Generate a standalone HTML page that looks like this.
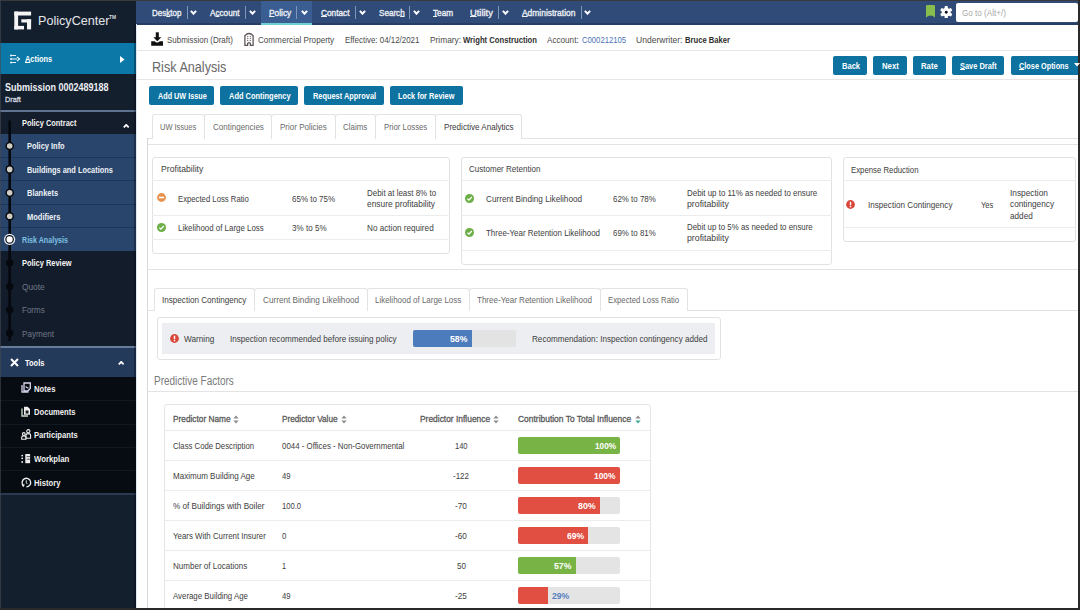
<!DOCTYPE html><html><head><meta charset="utf-8"><style>html,body{margin:0;padding:0;width:1080px;height:610px;overflow:hidden;background:#fff}body{position:relative;font-family:"Liberation Sans",sans-serif}div,span,svg{position:absolute}.t{white-space:nowrap;line-height:1;transform-origin:0 0}u{text-decoration:underline;text-underline-offset:0px;text-decoration-thickness:1px}</style></head><body>
<div style="left:0px;top:0px;width:136px;height:610px;background:#141f2e"></div>
<div style="left:0px;top:43px;width:136px;height:31px;background:#0b78a8"></div>
<div style="left:0px;top:110px;width:136px;height:2px;background:#5f7290"></div>
<div style="left:0px;top:112px;width:136px;height:22px;background:#141d2b"></div>
<div style="left:0px;top:134px;width:136px;height:117px;background:#2a456b"></div>
<div style="left:0px;top:157px;width:136px;height:1px;background:#1e365a"></div>
<div style="left:0px;top:180px;width:136px;height:1px;background:#1e365a"></div>
<div style="left:0px;top:204px;width:136px;height:1px;background:#1e365a"></div>
<div style="left:0px;top:227px;width:136px;height:1px;background:#1e365a"></div>
<div style="left:0px;top:251px;width:136px;height:94px;background:#131c2a"></div>
<div style="left:0px;top:345.5px;width:136px;height:2.0px;background:#667c9c"></div>
<div style="left:0px;top:347.5px;width:136px;height:29.5px;background:#243a5b"></div>
<div style="left:0px;top:377px;width:136px;height:117px;background:#070b12"></div>
<div style="left:0px;top:400px;width:136px;height:1px;background:#121822"></div>
<div style="left:0px;top:424px;width:136px;height:1px;background:#121822"></div>
<div style="left:0px;top:447px;width:136px;height:1px;background:#121822"></div>
<div style="left:0px;top:470px;width:136px;height:1px;background:#121822"></div>
<div style="left:0px;top:493px;width:136px;height:2px;background:#2a3a52"></div>
<div style="left:136px;top:0px;width:944px;height:24px;background:#314b78"></div>
<div style="left:261px;top:0px;width:51px;height:24px;background:#3b5e92"></div>
<div style="left:136px;top:23px;width:944px;height:2px;background:#273d64"></div>
<div style="left:261px;top:22.5px;width:51px;height:2.5px;background:#6fcfd6"></div>
<div style="left:956px;top:3px;width:122px;height:19px;background:#fff;border-radius:2px"></div>
<div style="left:136px;top:25px;width:944px;height:585px;background:#fff"></div>
<div style="left:136px;top:24px;width:1px;height:586px;background:#dfe8f2"></div>
<div style="left:136px;top:50px;width:944px;height:1px;background:#e6e6e6"></div>
<div style="left:136px;top:79px;width:944px;height:1px;background:#e6e6e6"></div>
<div style="left:149px;top:86px;width:65px;height:19px;background:#0d72a0;border-radius:2px"></div>
<div style="left:220px;top:86px;width:78px;height:19px;background:#0d72a0;border-radius:2px"></div>
<div style="left:304px;top:86px;width:80px;height:19px;background:#0d72a0;border-radius:2px"></div>
<div style="left:390px;top:86px;width:73px;height:19px;background:#0d72a0;border-radius:2px"></div>
<div style="left:833px;top:56px;width:34px;height:19px;background:#0d72a0;border-radius:2px"></div>
<div style="left:873px;top:56px;width:34px;height:19px;background:#0d72a0;border-radius:2px"></div>
<div style="left:913px;top:56px;width:33px;height:19px;background:#0d72a0;border-radius:2px"></div>
<div style="left:952px;top:56px;width:52px;height:19px;background:#0d72a0;border-radius:2px"></div>
<div style="left:1011px;top:56px;width:79px;height:19px;background:#0d72a0;border-radius:2px"></div>
<div style="left:147px;top:138px;width:933px;height:1px;background:#e3e3e3"></div>
<div style="left:152px;top:114px;width:53px;height:25px;border:1px solid #e3e3e3;border-bottom:0;border-radius:3px 3px 0 0;box-sizing:border-box;background:#fff"></div>
<div style="left:204px;top:114px;width:68px;height:25px;border:1px solid #e3e3e3;border-bottom:0;border-radius:3px 3px 0 0;box-sizing:border-box;background:#fff"></div>
<div style="left:271px;top:114px;width:65px;height:25px;border:1px solid #e3e3e3;border-bottom:0;border-radius:3px 3px 0 0;box-sizing:border-box;background:#fff"></div>
<div style="left:335px;top:114px;width:41px;height:25px;border:1px solid #e3e3e3;border-bottom:0;border-radius:3px 3px 0 0;box-sizing:border-box;background:#fff"></div>
<div style="left:375px;top:114px;width:61px;height:25px;border:1px solid #e3e3e3;border-bottom:0;border-radius:3px 3px 0 0;box-sizing:border-box;background:#fff"></div>
<div style="left:435px;top:114px;width:87px;height:25px;border:1px solid #e3e3e3;border-bottom:0;border-radius:3px 3px 0 0;box-sizing:border-box;background:#fff"></div>
<div style="left:436px;top:138px;width:85px;height:1px;background:#fff"></div>
<div style="left:147px;top:144px;width:933px;height:1px;background:#e3e3e3"></div>
<div style="left:147px;top:138px;width:1px;height:472px;background:#d8d8d8"></div>
<div style="left:152px;top:157px;width:298px;height:97px;border:1px solid #e2e2e2;border-radius:3px;box-sizing:border-box;background:#fff"></div>
<div style="left:152px;top:180px;width:298px;height:1px;background:#ececec"></div>
<div style="left:152px;top:215px;width:298px;height:1px;background:#ececec"></div>
<div style="left:152px;top:239px;width:298px;height:1px;background:#ececec"></div>
<div style="left:461px;top:157px;width:371px;height:108px;border:1px solid #e2e2e2;border-radius:3px;box-sizing:border-box;background:#fff"></div>
<div style="left:461px;top:180px;width:371px;height:1px;background:#ececec"></div>
<div style="left:461px;top:215px;width:371px;height:1px;background:#ececec"></div>
<div style="left:461px;top:250px;width:371px;height:1px;background:#ececec"></div>
<div style="left:843px;top:157px;width:233px;height:85px;border:1px solid #e2e2e2;border-radius:3px;box-sizing:border-box;background:#fff"></div>
<div style="left:843px;top:180px;width:233px;height:1px;background:#ececec"></div>
<div style="left:843px;top:227px;width:233px;height:1px;background:#ececec"></div>
<div style="left:147px;top:269px;width:933px;height:1px;background:#e3e3e3"></div>
<div style="left:147px;top:310px;width:933px;height:1px;background:#e3e3e3"></div>
<div style="left:154px;top:288px;width:101px;height:23px;border:1px solid #e3e3e3;border-bottom:0;border-radius:3px 3px 0 0;box-sizing:border-box;background:#fff"></div>
<div style="left:254px;top:288px;width:114px;height:23px;border:1px solid #e3e3e3;border-bottom:0;border-radius:3px 3px 0 0;box-sizing:border-box;background:#fff"></div>
<div style="left:367px;top:288px;width:103px;height:23px;border:1px solid #e3e3e3;border-bottom:0;border-radius:3px 3px 0 0;box-sizing:border-box;background:#fff"></div>
<div style="left:469px;top:288px;width:132px;height:23px;border:1px solid #e3e3e3;border-bottom:0;border-radius:3px 3px 0 0;box-sizing:border-box;background:#fff"></div>
<div style="left:600px;top:288px;width:88px;height:23px;border:1px solid #e3e3e3;border-bottom:0;border-radius:3px 3px 0 0;box-sizing:border-box;background:#fff"></div>
<div style="left:155px;top:310px;width:99px;height:1px;background:#fff"></div>
<div style="left:157px;top:317px;width:564px;height:43px;border:1px solid #e2e2e2;border-radius:3px;box-sizing:border-box;background:#fff"></div>
<div style="left:162px;top:323px;width:553px;height:31px;background:#eceef2"></div>
<div style="left:413px;top:330px;width:103px;height:17px;background:#e3e3e3;border-radius:2px"></div>
<div style="left:413px;top:330px;width:59px;height:17px;background:#4d7cbd;border-radius:2px 0 0 2px"></div>
<div style="left:147px;top:391px;width:933px;height:1px;background:#e3e3e3"></div>
<div style="left:164px;top:404px;width:487px;height:216px;border:1px solid #e4e4e4;border-radius:3px;box-sizing:border-box;background:#fff"></div>
<div style="left:165px;top:430px;width:485px;height:1px;background:#ececec"></div>
<div style="left:165px;top:460px;width:485px;height:1px;background:#ececec"></div>
<div style="left:165px;top:490px;width:485px;height:1px;background:#ececec"></div>
<div style="left:165px;top:520px;width:485px;height:1px;background:#ececec"></div>
<div style="left:165px;top:550px;width:485px;height:1px;background:#ececec"></div>
<div style="left:165px;top:580px;width:485px;height:1px;background:#ececec"></div>
<div style="left:518px;top:437px;width:102px;height:17px;background:#e4e4e4;border-radius:2px"></div>
<div style="left:518px;top:437px;width:102px;height:17px;background:#78b445;border-radius:2px"></div>
<div style="left:518px;top:467px;width:102px;height:17px;background:#e4e4e4;border-radius:2px"></div>
<div style="left:518px;top:467px;width:102px;height:17px;background:#e04f42;border-radius:2px"></div>
<div style="left:518px;top:497px;width:102px;height:17px;background:#e4e4e4;border-radius:2px"></div>
<div style="left:518px;top:497px;width:82px;height:17px;background:#e04f42;border-radius:2px 0 0 2px"></div>
<div style="left:518px;top:527px;width:102px;height:17px;background:#e4e4e4;border-radius:2px"></div>
<div style="left:518px;top:527px;width:70px;height:17px;background:#e04f42;border-radius:2px 0 0 2px"></div>
<div style="left:518px;top:557px;width:102px;height:17px;background:#e4e4e4;border-radius:2px"></div>
<div style="left:518px;top:557px;width:58px;height:17px;background:#78b445;border-radius:2px 0 0 2px"></div>
<div style="left:518px;top:587px;width:102px;height:17px;background:#e4e4e4;border-radius:2px"></div>
<div style="left:518px;top:587px;width:30px;height:17px;background:#e04f42;border-radius:2px 0 0 2px"></div>
<div style="left:0px;top:0px;width:1080px;height:1px;background:#3a3a3a"></div>
<div style="left:0px;top:0px;width:1px;height:610px;background:rgba(70,74,80,0.6)"></div>
<div style="left:134px;top:24px;width:2px;height:586px;background:rgba(5,10,20,0.35)"></div>
<div style="left:1078px;top:0px;width:2px;height:610px;background:#2a2a2a"></div>
<div style="left:0px;top:608px;width:1080px;height:2px;background:#2a2a2a"></div>
<div style="left:187px;top:6px;width:1px;height:13px;background:#7f97bb"></div>
<div style="left:245px;top:6px;width:1px;height:13px;background:#7f97bb"></div>
<div style="left:296px;top:6px;width:1px;height:13px;background:#7f97bb"></div>
<div style="left:355px;top:6px;width:1px;height:13px;background:#7f97bb"></div>
<div style="left:409px;top:6px;width:1px;height:13px;background:#7f97bb"></div>
<div style="left:498px;top:6px;width:1px;height:13px;background:#7f97bb"></div>
<div style="left:581px;top:6px;width:1px;height:13px;background:#7f97bb"></div>
<svg style="position:absolute;left:14px;top:11px" width="18" height="19" viewBox="0 0 18 19"><g fill="#f4f4f4"><rect x="0.3" y="0.6" width="16.8" height="3.9"/><rect x="0.3" y="0.6" width="3.8" height="17.8"/><rect x="0.3" y="14.9" width="9.7" height="3.5"/><rect x="13" y="8.3" width="4.1" height="10.1"/><rect x="7.3" y="8.3" width="9.8" height="3.2"/></g></svg>
<svg style="position:absolute;left:10px;top:54px" width="11" height="10" viewBox="0 0 11 10"><g stroke="#e8f4fa" stroke-width="1.2" fill="none"><path d="M1 1.5h5M1 5h6M1 8.5h5"/><path d="M7 3l2.5 2-2.5 2"/></g><g fill="#e8f4fa"><circle cx="1" cy="1.5" r="1"/><circle cx="1" cy="5" r="1"/><circle cx="1" cy="8.5" r="1"/></g></svg>
<svg style="position:absolute;left:120px;top:56px" width="5" height="7" viewBox="0 0 5 7"><path d="M0 0L4.5 3.5L0 7z" fill="#fff"/></svg>
<svg style="position:absolute;left:123px;top:124px" width="6.5" height="4" viewBox="0 0 6.5 4"><path d="M0.8 3.4L3.25 0.9L5.7 3.4" stroke="#fff" stroke-width="1.8" fill="none"/></svg>
<svg style="position:absolute;left:117.7px;top:360.6px" width="6.5" height="4" viewBox="0 0 6.5 4"><path d="M0.8 3.4L3.25 0.9L5.7 3.4" stroke="#fff" stroke-width="1.8" fill="none"/></svg>
<svg style="position:absolute;left:0;top:120px" width="20" height="225" viewBox="0 120 20 225"><path d="M9.7 120.5V341" stroke="#05080d" stroke-width="2.6"/><circle cx="9.7" cy="146" r="4.3" fill="#070a10"/><circle cx="9.7" cy="146" r="2.8" fill="#cfcdc4"/><circle cx="9.7" cy="169.4" r="4.3" fill="#070a10"/><circle cx="9.7" cy="169.4" r="2.8" fill="#cfcdc4"/><circle cx="9.7" cy="192.8" r="4.3" fill="#070a10"/><circle cx="9.7" cy="192.8" r="2.8" fill="#cfcdc4"/><circle cx="9.7" cy="216.2" r="4.3" fill="#070a10"/><circle cx="9.7" cy="216.2" r="2.8" fill="#cfcdc4"/><circle cx="9.6" cy="239.4" r="5.6" fill="#e8ecf2"/><circle cx="9.6" cy="239.4" r="4.3" fill="#0c1018"/><circle cx="9.6" cy="239.4" r="3.1" fill="#fff"/><circle cx="9.7" cy="263" r="3.6" fill="#05080d"/><circle cx="9.7" cy="286.4" r="3.6" fill="#05080d"/><circle cx="9.7" cy="309.8" r="3.6" fill="#05080d"/><circle cx="9.7" cy="333.2" r="3.6" fill="#05080d"/></svg>
<svg style="position:absolute;left:10px;top:358px" width="9" height="9" viewBox="0 0 9 9"><path d="M1 1L8 8M8 1L1 8" stroke="#fff" stroke-width="2"/></svg>
<svg style="position:absolute;left:21px;top:382px" width="10" height="11" viewBox="0 0 10 11"><path d="M1 3V10H7.5" fill="none" stroke="#d4d0ea" stroke-width="1.3"/><path d="M3 1H9.3V6.5L6.8 9H3Z" fill="none" stroke="#dcd8f0" stroke-width="1.3"/><path d="M5 4.2Q5.2 6.3 7.6 5.8" fill="none" stroke="#dcd8f0" stroke-width="1.1"/></svg>
<svg style="position:absolute;left:21px;top:406px" width="10" height="11" viewBox="0 0 10 11"><path d="M1 2.5V10H7" fill="none" stroke="#cfe0c8" stroke-width="1.3"/><path d="M3 0.7H6.6L9 3.1V8.8H3Z" fill="#eeeeee"/><path d="M4.6 4.5H7.5V7.5H4.6Z" fill="#1a1a1a"/></svg>
<svg style="position:absolute;left:20.5px;top:429px" width="11" height="11" viewBox="0 0 11 11"><g fill="none" stroke="#eeeeee" stroke-width="1.1"><circle cx="7.3" cy="2.2" r="1.6"/><path d="M5 9.2V6.3Q5 4.6 7.3 4.6Q9.6 4.6 9.6 6.3V9.2Z"/><circle cx="2.8" cy="5" r="1.4"/><path d="M0.7 10.2V8.3Q0.7 6.9 2.8 6.9Q4.9 6.9 4.9 8.3V10.2Z"/></g></svg>
<svg style="position:absolute;left:21px;top:453px" width="10" height="11" viewBox="0 0 10 11"><g fill="#eeeeee"><circle cx="1.2" cy="2.6" r="0.9"/><circle cx="1.2" cy="5.3" r="0.9"/><circle cx="1.2" cy="9" r="0.9"/><rect x="4.3" y="1" width="4.8" height="9.2"/></g><path d="M5.6 3.6H9.1M5.6 6.2H9.1" stroke="#333" stroke-width="0.8"/></svg>
<svg style="position:absolute;left:20.5px;top:476.5px" width="11" height="11" viewBox="0 0 11 11"><path d="M2.4 8.7A4.3 4.3 0 1 1 5.4 9.9" fill="none" stroke="#eeeeee" stroke-width="1.3"/><path d="M0.6 7.3L3.9 7.6L2.3 10.2Z" fill="#eeeeee"/><path d="M5.3 3.3V5.9L6.4 7" fill="none" stroke="#cfe6d8" stroke-width="1"/></svg>
<svg style="position:absolute;left:190.1px;top:9.8px" width="7" height="5" viewBox="0 0 7 5"><path d="M0.9 0.9L3.5 3.7L6.1 0.9" stroke="#fff" stroke-width="2" fill="none"/></svg>
<svg style="position:absolute;left:248.7px;top:9.8px" width="7" height="5" viewBox="0 0 7 5"><path d="M0.9 0.9L3.5 3.7L6.1 0.9" stroke="#fff" stroke-width="2" fill="none"/></svg>
<svg style="position:absolute;left:300.7px;top:9.8px" width="7" height="5" viewBox="0 0 7 5"><path d="M0.9 0.9L3.5 3.7L6.1 0.9" stroke="#fff" stroke-width="2" fill="none"/></svg>
<svg style="position:absolute;left:358.7px;top:9.8px" width="7" height="5" viewBox="0 0 7 5"><path d="M0.9 0.9L3.5 3.7L6.1 0.9" stroke="#fff" stroke-width="2" fill="none"/></svg>
<svg style="position:absolute;left:412.7px;top:9.8px" width="7" height="5" viewBox="0 0 7 5"><path d="M0.9 0.9L3.5 3.7L6.1 0.9" stroke="#fff" stroke-width="2" fill="none"/></svg>
<svg style="position:absolute;left:501.5px;top:9.8px" width="7" height="5" viewBox="0 0 7 5"><path d="M0.9 0.9L3.5 3.7L6.1 0.9" stroke="#fff" stroke-width="2" fill="none"/></svg>
<svg style="position:absolute;left:584.1px;top:9.8px" width="7" height="5" viewBox="0 0 7 5"><path d="M0.9 0.9L3.5 3.7L6.1 0.9" stroke="#fff" stroke-width="2" fill="none"/></svg>
<svg style="position:absolute;left:926px;top:5px" width="9" height="13" viewBox="0 0 9 13"><path d="M0 1.2Q0 0 1.2 0H7.8Q9 0 9 1.2V12.6Q4.5 8.6 0 12.6Z" fill="#86bd4c"/></svg>
<svg style="position:absolute;left:940px;top:5.8px" width="12.5" height="12.5" viewBox="-6.25 -6.25 12.5 12.5"><g fill="#fff"><rect x="-1.6" y="-6.2" width="3.2" height="3.4" rx="0.8" transform="rotate(0)"/><rect x="-1.6" y="-6.2" width="3.2" height="3.4" rx="0.8" transform="rotate(60)"/><rect x="-1.6" y="-6.2" width="3.2" height="3.4" rx="0.8" transform="rotate(120)"/><rect x="-1.6" y="-6.2" width="3.2" height="3.4" rx="0.8" transform="rotate(180)"/><rect x="-1.6" y="-6.2" width="3.2" height="3.4" rx="0.8" transform="rotate(240)"/><rect x="-1.6" y="-6.2" width="3.2" height="3.4" rx="0.8" transform="rotate(300)"/><circle r="4.4"/></g><circle r="1.4" fill="#0a0f22"/></svg>
<svg style="position:absolute;left:151px;top:32px" width="13" height="14" viewBox="0 0 13 14"><g fill="#111"><rect x="4.8" y="0.3" width="3" height="5.6"/><path d="M2.3 5.2H10.3L6.3 9.2Z"/><path d="M0.2 9.2H3.6Q6.2 11.6 8.8 9.2H12V13.7H0.2Z"/></g></svg>
<svg style="position:absolute;left:244px;top:32px" width="11" height="14" viewBox="0 0 11 14"><path d="M0.9 13.3V3.6Q5 -0.6 9.1 3.6V13.3H6.4V11.4Q5 9.9 3.6 11.4V13.3Z" fill="none" stroke="#5e5656" stroke-width="1.3"/><rect x="3.0" y="4.0" width="1.3" height="1.1" fill="#7a7a7a"/><rect x="3.0" y="6.0" width="1.3" height="1.1" fill="#7a7a7a"/><rect x="3.0" y="8.0" width="1.3" height="1.1" fill="#7a7a7a"/><rect x="5.7" y="4.0" width="1.3" height="1.1" fill="#7a7a7a"/><rect x="5.7" y="6.0" width="1.3" height="1.1" fill="#7a7a7a"/><rect x="5.7" y="8.0" width="1.3" height="1.1" fill="#7a7a7a"/></svg>
<svg style="position:absolute;left:156.8px;top:193.2px" width="9" height="9" viewBox="0 0 9 9"><circle cx="4.5" cy="4.5" r="4.4" fill="#e8914c"/><rect x="2" y="3.7" width="5" height="1.6" fill="#fff"/></svg>
<svg style="position:absolute;left:156.8px;top:222.7px" width="9" height="9" viewBox="0 0 9 9"><circle cx="4.5" cy="4.5" r="4.5" fill="#6daf47"/><path d="M2.3 4.6L3.9 6.1L6.8 3" stroke="#fff" stroke-width="1.3" fill="none"/></svg>
<svg style="position:absolute;left:464.7px;top:193.7px" width="9" height="9" viewBox="0 0 9 9"><circle cx="4.5" cy="4.5" r="4.5" fill="#6daf47"/><path d="M2.3 4.6L3.9 6.1L6.8 3" stroke="#fff" stroke-width="1.3" fill="none"/></svg>
<svg style="position:absolute;left:464.7px;top:228.1px" width="9" height="9" viewBox="0 0 9 9"><circle cx="4.5" cy="4.5" r="4.5" fill="#6daf47"/><path d="M2.3 4.6L3.9 6.1L6.8 3" stroke="#fff" stroke-width="1.3" fill="none"/></svg>
<svg style="position:absolute;left:846.4px;top:199.5px" width="9" height="9" viewBox="0 0 9 9"><circle cx="4.5" cy="4.5" r="4.4" fill="#d9473b"/><rect x="3.8" y="1.7" width="1.4" height="3.6" fill="#fff"/><rect x="3.8" y="6" width="1.4" height="1.3" fill="#fff"/></svg>
<svg style="position:absolute;left:169.5px;top:333.7px" width="9" height="9" viewBox="0 0 9 9"><circle cx="4.5" cy="4.5" r="4.4" fill="#d9473b"/><rect x="3.8" y="1.7" width="1.4" height="3.6" fill="#fff"/><rect x="3.8" y="6" width="1.4" height="1.3" fill="#fff"/></svg>
<svg style="position:absolute;left:233px;top:414.5px" width="6" height="10" viewBox="0 0 6 10"><path d="M0.4 3.4L3 0.4L5.6 3.4Z" fill="#8c8c8c"/><path d="M0.4 5.6L3 8.6L5.6 5.6Z" fill="#8c8c8c"/></svg>
<svg style="position:absolute;left:341.3px;top:414.5px" width="6" height="10" viewBox="0 0 6 10"><path d="M0.4 3.4L3 0.4L5.6 3.4Z" fill="#8c8c8c"/><path d="M0.4 5.6L3 8.6L5.6 5.6Z" fill="#8c8c8c"/></svg>
<svg style="position:absolute;left:493.2px;top:414.5px" width="6" height="10" viewBox="0 0 6 10"><path d="M0.4 3.4L3 0.4L5.6 3.4Z" fill="#8c8c8c"/><path d="M0.4 5.6L3 8.6L5.6 5.6Z" fill="#8c8c8c"/></svg>
<svg style="position:absolute;left:634.5px;top:414.5px" width="6" height="10" viewBox="0 0 6 10"><path d="M0.4 3.4L3 0.4L5.6 3.4Z" fill="#8c8c8c"/><path d="M0.4 5.6L3 8.6L5.6 5.6Z" fill="#3aa898"/></svg>
<svg style="position:absolute;left:1074px;top:63px" width="6" height="4" viewBox="0 0 6 4"><path d="M0 0H6L3 3.5Z" fill="#fff"/></svg>
<span class="t" style="left:37.50px;top:14px;font-size:13px;color:#e4e6ea;transform:scaleX(0.9698);">PolicyCenter</span>
<span class="t" style="left:109.20px;top:15px;font-size:5px;color:#d8dade;font-weight:700;transform:scaleX(0.9814);">TM</span>
<span class="t" style="left:25.00px;top:55px;font-size:9px;color:#ffffff;font-weight:700;transform:scaleX(0.8220);"><u>A</u>ctions</span>
<span class="t" style="left:5.40px;top:82px;font-size:10.5px;color:#eef0f3;font-weight:700;transform:scaleX(0.8560);">Submission 0002489188</span>
<span class="t" style="left:5.40px;top:96px;font-size:8px;color:#d8dbe0;transform:scaleX(0.9098);-webkit-text-stroke:0.3px #d8dbe0">Draft</span>
<span class="t" style="left:21.80px;top:118px;font-size:9.5px;color:#f4f4f4;font-weight:700;transform:scaleX(0.7816);">Policy Contract</span>
<span class="t" style="left:26.50px;top:141px;font-size:9.5px;color:#eef2f7;font-weight:700;transform:scaleX(0.7840);">Policy Info</span>
<span class="t" style="left:26.50px;top:165px;font-size:9.5px;color:#eef2f7;font-weight:700;transform:scaleX(0.7784);">Buildings and Locations</span>
<span class="t" style="left:26.50px;top:188px;font-size:9.5px;color:#eef2f7;font-weight:700;transform:scaleX(0.7844);">Blankets</span>
<span class="t" style="left:26.50px;top:212px;font-size:9.5px;color:#eef2f7;font-weight:700;transform:scaleX(0.7901);">Modifiers</span>
<span class="t" style="left:21.80px;top:235px;font-size:9.5px;color:#7fc1e6;font-weight:700;transform:scaleX(0.7482);">Risk Analysis</span>
<span class="t" style="left:21.80px;top:258px;font-size:9.5px;color:#f4f4f4;font-weight:700;transform:scaleX(0.7822);">Policy Review</span>
<span class="t" style="left:21.80px;top:282px;font-size:9.5px;color:#6f7888;transform:scaleX(0.8756);">Quote</span>
<span class="t" style="left:21.80px;top:305px;font-size:9.5px;color:#6f7888;transform:scaleX(0.8421);">Forms</span>
<span class="t" style="left:21.80px;top:329px;font-size:9.5px;color:#6f7888;transform:scaleX(0.8552);">Payment</span>
<span class="t" style="left:24.60px;top:358px;font-size:9.5px;color:#ffffff;font-weight:700;transform:scaleX(0.7861);">Tools</span>
<span class="t" style="left:34.10px;top:384px;font-size:9.5px;color:#f0f0f0;font-weight:700;transform:scaleX(0.8131);">Notes</span>
<span class="t" style="left:34.10px;top:407px;font-size:9.5px;color:#f0f0f0;font-weight:700;transform:scaleX(0.8016);">Documents</span>
<span class="t" style="left:34.10px;top:430px;font-size:9.5px;color:#f0f0f0;font-weight:700;transform:scaleX(0.8029);">Participants</span>
<span class="t" style="left:34.10px;top:454px;font-size:9.5px;color:#f0f0f0;font-weight:700;transform:scaleX(0.8205);">Workplan</span>
<span class="t" style="left:34.10px;top:478px;font-size:9.5px;color:#f0f0f0;font-weight:700;transform:scaleX(0.8117);">History</span>
<span class="t" style="left:151.60px;top:8px;font-size:9.5px;color:#eef1f6;transform:scaleX(0.8422);-webkit-text-stroke:0.35px #eef1f6">Des<u>k</u>top</span>
<span class="t" style="left:210.40px;top:8px;font-size:9.5px;color:#eef1f6;transform:scaleX(0.8581);-webkit-text-stroke:0.35px #eef1f6">A<u>c</u>count</span>
<span class="t" style="left:269.30px;top:8px;font-size:9.5px;color:#eef1f6;transform:scaleX(0.8782);-webkit-text-stroke:0.35px #eef1f6"><u>P</u>olicy</span>
<span class="t" style="left:321.00px;top:8px;font-size:9.5px;color:#eef1f6;transform:scaleX(0.8720);-webkit-text-stroke:0.35px #eef1f6"><u>C</u>ontact</span>
<span class="t" style="left:378.90px;top:8px;font-size:9.5px;color:#eef1f6;transform:scaleX(0.8521);-webkit-text-stroke:0.35px #eef1f6">Searc<u>h</u></span>
<span class="t" style="left:433.30px;top:8px;font-size:9.5px;color:#eef1f6;transform:scaleX(0.8681);-webkit-text-stroke:0.35px #eef1f6"><u>T</u>eam</span>
<span class="t" style="left:470.40px;top:8px;font-size:9.5px;color:#eef1f6;transform:scaleX(0.9837);-webkit-text-stroke:0.35px #eef1f6"><u>U</u>tility</span>
<span class="t" style="left:522.20px;top:8px;font-size:9.5px;color:#eef1f6;transform:scaleX(0.8865);-webkit-text-stroke:0.35px #eef1f6"><u>A</u>dministration</span>
<span class="t" style="left:962.00px;top:8px;font-size:9.4px;color:#a9a9a9;transform:scaleX(0.8633);">Go to (Alt+/)</span>
<span class="t" style="left:166.80px;top:35px;font-size:9.4px;color:#4a4a4a;transform:scaleX(0.8485);">Submission (Draft)</span>
<span class="t" style="left:258.40px;top:35px;font-size:9.4px;color:#4a4a4a;transform:scaleX(0.8650);">Commercial Property</span>
<span class="t" style="left:345.00px;top:35px;font-size:9.4px;color:#4a4a4a;transform:scaleX(0.8469);">Effective: 04/12/2021</span>
<span class="t" style="left:429.50px;top:35px;font-size:9.4px;color:#4a4a4a;transform:scaleX(0.8899);">Primary:</span>
<span class="t" style="left:463.00px;top:35px;font-size:9.4px;color:#2e2e2e;font-weight:700;transform:scaleX(0.8177);">Wright Construction</span>
<span class="t" style="left:547.40px;top:35px;font-size:9.4px;color:#4a4a4a;transform:scaleX(0.8679);">Account:</span>
<span class="t" style="left:581.50px;top:35px;font-size:9.4px;color:#4b72b4;transform:scaleX(0.8205);">C000212105</span>
<span class="t" style="left:636.30px;top:35px;font-size:9.4px;color:#4a4a4a;transform:scaleX(0.9099);">Underwriter:</span>
<span class="t" style="left:684.60px;top:35px;font-size:9.4px;color:#2e2e2e;font-weight:700;transform:scaleX(0.8138);">Bruce Baker</span>
<span class="t" style="left:152.30px;top:59px;font-size:15.5px;color:#686868;transform:scaleX(0.8151);">Risk Analysis</span>
<span class="t" style="left:157.90px;top:92px;font-size:9.3px;color:#ffffff;font-weight:700;transform:scaleX(0.7785);">Add UW Issue</span>
<span class="t" style="left:228.60px;top:92px;font-size:9.3px;color:#ffffff;font-weight:700;transform:scaleX(0.8011);">Add Contingency</span>
<span class="t" style="left:312.70px;top:92px;font-size:9.3px;color:#ffffff;font-weight:700;transform:scaleX(0.7960);">Request Approval</span>
<span class="t" style="left:398.20px;top:92px;font-size:9.3px;color:#ffffff;font-weight:700;transform:scaleX(0.7903);">Lock for Review</span>
<span class="t" style="left:841.70px;top:62px;font-size:9.3px;color:#ffffff;font-weight:700;transform:scaleX(0.8122);">Back</span>
<span class="t" style="left:882.00px;top:62px;font-size:9.3px;color:#ffffff;font-weight:700;transform:scaleX(0.8314);">Next</span>
<span class="t" style="left:921.00px;top:62px;font-size:9.3px;color:#ffffff;font-weight:700;transform:scaleX(0.8314);">Rate</span>
<span class="t" style="left:960.00px;top:62px;font-size:9.3px;color:#ffffff;font-weight:700;transform:scaleX(0.7991);"><u>S</u>ave Draft</span>
<span class="t" style="left:1019.30px;top:62px;font-size:9.3px;color:#ffffff;font-weight:700;transform:scaleX(0.7878);"><u>C</u>lose Options</span>
<span class="t" style="left:160.00px;top:122px;font-size:9.4px;color:#6a6a6a;transform:scaleX(0.7978);">UW Issues</span>
<span class="t" style="left:212.80px;top:122px;font-size:9.4px;color:#6a6a6a;transform:scaleX(0.8560);">Contingencies</span>
<span class="t" style="left:279.80px;top:122px;font-size:9.4px;color:#6a6a6a;transform:scaleX(0.8549);">Prior Policies</span>
<span class="t" style="left:343.30px;top:122px;font-size:9.4px;color:#6a6a6a;transform:scaleX(0.8467);">Claims</span>
<span class="t" style="left:384.00px;top:122px;font-size:9.4px;color:#6a6a6a;transform:scaleX(0.8303);">Prior Losses</span>
<span class="t" style="left:443.90px;top:122px;font-size:9.4px;color:#3a3a3a;transform:scaleX(0.8625);">Predictive Analytics</span>
<span class="t" style="left:161.30px;top:164px;font-size:9.4px;color:#404040;transform:scaleX(0.9238);">Profitability</span>
<span class="t" style="left:178.40px;top:194px;font-size:9.4px;color:#404040;transform:scaleX(0.8240);">Expected Loss Ratio</span>
<span class="t" style="left:292.20px;top:194px;font-size:9.4px;color:#404040;transform:scaleX(0.8517);">65% to 75%</span>
<span class="t" style="left:366.90px;top:188px;font-size:9.4px;color:#404040;transform:scaleX(0.8495);">Debit at least 8% to</span>
<span class="t" style="left:366.90px;top:199px;font-size:9.4px;color:#404040;transform:scaleX(0.8945);">ensure profitability</span>
<span class="t" style="left:178.40px;top:223px;font-size:9.4px;color:#404040;transform:scaleX(0.8438);">Likelihood of Large Loss</span>
<span class="t" style="left:292.20px;top:223px;font-size:9.4px;color:#404040;transform:scaleX(0.8611);">3% to 5%</span>
<span class="t" style="left:366.90px;top:223px;font-size:9.4px;color:#404040;transform:scaleX(0.8702);">No action required</span>
<span class="t" style="left:469.20px;top:164px;font-size:9.4px;color:#404040;transform:scaleX(0.8559);">Customer Retention</span>
<span class="t" style="left:486.00px;top:194px;font-size:9.4px;color:#404040;transform:scaleX(0.8736);">Current Binding Likelihood</span>
<span class="t" style="left:612.70px;top:194px;font-size:9.4px;color:#404040;transform:scaleX(0.8458);">62% to 78%</span>
<span class="t" style="left:687.30px;top:188px;font-size:9.4px;color:#404040;transform:scaleX(0.8453);">Debit up to 11% as needed to ensure</span>
<span class="t" style="left:687.30px;top:199px;font-size:9.4px;color:#404040;transform:scaleX(0.9320);">profitability</span>
<span class="t" style="left:486.00px;top:228px;font-size:9.4px;color:#404040;transform:scaleX(0.8504);">Three-Year Retention Likelihood</span>
<span class="t" style="left:612.70px;top:228px;font-size:9.4px;color:#404040;transform:scaleX(0.8458);">69% to 81%</span>
<span class="t" style="left:687.30px;top:222px;font-size:9.4px;color:#404040;transform:scaleX(0.8407);">Debit up to 5% as needed to ensure</span>
<span class="t" style="left:687.30px;top:233px;font-size:9.4px;color:#404040;transform:scaleX(0.9320);">profitability</span>
<span class="t" style="left:850.90px;top:165px;font-size:9.4px;color:#404040;transform:scaleX(0.8297);">Expense Reduction</span>
<span class="t" style="left:867.90px;top:200px;font-size:9.4px;color:#404040;transform:scaleX(0.8666);">Inspection Contingency</span>
<span class="t" style="left:981.30px;top:200px;font-size:9.4px;color:#404040;transform:scaleX(0.8083);">Yes</span>
<span class="t" style="left:1009.70px;top:188px;font-size:9.4px;color:#404040;transform:scaleX(0.8880);">Inspection</span>
<span class="t" style="left:1009.70px;top:199px;font-size:9.4px;color:#404040;transform:scaleX(0.8805);">contingency</span>
<span class="t" style="left:1009.70px;top:211px;font-size:9.4px;color:#404040;transform:scaleX(0.8729);">added</span>
<span class="t" style="left:161.80px;top:295px;font-size:9.4px;color:#404040;transform:scaleX(0.8655);">Inspection Contingency</span>
<span class="t" style="left:262.70px;top:295px;font-size:9.4px;color:#6a6a6a;transform:scaleX(0.8736);">Current Binding Likelihood</span>
<span class="t" style="left:375.10px;top:295px;font-size:9.4px;color:#6a6a6a;transform:scaleX(0.8487);">Likelihood of Large Loss</span>
<span class="t" style="left:477.10px;top:295px;font-size:9.4px;color:#6a6a6a;transform:scaleX(0.8564);">Three-Year Retention Likelihood</span>
<span class="t" style="left:608.00px;top:295px;font-size:9.4px;color:#6a6a6a;transform:scaleX(0.8275);">Expected Loss Ratio</span>
<span class="t" style="left:183.90px;top:334px;font-size:9.4px;color:#404040;transform:scaleX(0.8785);">Warning</span>
<span class="t" style="left:230.00px;top:334px;font-size:9.4px;color:#404040;transform:scaleX(0.8638);">Inspection recommended before issuing policy</span>
<span class="t" style="left:450.40px;top:334px;font-size:9.4px;color:#ffffff;font-weight:700;transform:scaleX(0.9253);">58%</span>
<span class="t" style="left:532.00px;top:334px;font-size:9.4px;color:#404040;transform:scaleX(0.8660);">Recommendation: Inspection contingency added</span>
<span class="t" style="left:153.90px;top:375px;font-size:12.3px;color:#7a7a7a;transform:scaleX(0.8113);">Predictive Factors</span>
<span class="t" style="left:172.80px;top:414px;font-size:9.4px;color:#555;transform:scaleX(0.8837);-webkit-text-stroke:0.3px #5a5a5a">Predictor Name</span>
<span class="t" style="left:282.00px;top:414px;font-size:9.4px;color:#555;transform:scaleX(0.8763);-webkit-text-stroke:0.3px #5a5a5a">Predictor Value</span>
<span class="t" style="left:420.00px;top:414px;font-size:9.4px;color:#555;transform:scaleX(0.8976);-webkit-text-stroke:0.3px #5a5a5a">Predictor Influence</span>
<span class="t" style="left:518.00px;top:414px;font-size:9.4px;color:#555;transform:scaleX(0.8997);-webkit-text-stroke:0.3px #5a5a5a">Contribution To Total Influence</span>
<span class="t" style="left:172.80px;top:441px;font-size:9.4px;color:#404040;transform:scaleX(0.8274);">Class Code Description</span>
<span class="t" style="left:282.00px;top:441px;font-size:9.4px;color:#404040;transform:scaleX(0.8396);">0044 - Offices - Non-Governmental</span>
<span class="t" style="left:454.90px;top:441px;font-size:9.4px;color:#404040;transform:scaleX(0.8025);">140</span>
<span class="t" style="left:594.50px;top:441px;font-size:9.4px;color:#ffffff;font-weight:700;transform:scaleX(0.8782);">100%</span>
<span class="t" style="left:172.80px;top:471px;font-size:9.4px;color:#404040;transform:scaleX(0.8574);">Maximum Building Age</span>
<span class="t" style="left:282.00px;top:471px;font-size:9.4px;color:#404040;transform:scaleX(0.8301);">49</span>
<span class="t" style="left:453.00px;top:471px;font-size:9.4px;color:#404040;transform:scaleX(0.8454);">-122</span>
<span class="t" style="left:594.30px;top:471px;font-size:9.4px;color:#ffffff;font-weight:700;transform:scaleX(0.8949);">100%</span>
<span class="t" style="left:172.80px;top:501px;font-size:9.4px;color:#404040;transform:scaleX(0.8689);">% of Buildings with Boiler</span>
<span class="t" style="left:282.00px;top:501px;font-size:9.4px;color:#404040;transform:scaleX(0.8123);">100.0</span>
<span class="t" style="left:455.00px;top:501px;font-size:9.4px;color:#404040;transform:scaleX(0.8748);">-70</span>
<span class="t" style="left:577.60px;top:501px;font-size:9.4px;color:#ffffff;font-weight:700;transform:scaleX(0.9466);">80%</span>
<span class="t" style="left:172.80px;top:531px;font-size:9.4px;color:#404040;transform:scaleX(0.8384);">Years With Current Insurer</span>
<span class="t" style="left:282.00px;top:531px;font-size:9.4px;color:#404040;transform:scaleX(0.8362);">0</span>
<span class="t" style="left:455.00px;top:531px;font-size:9.4px;color:#404040;transform:scaleX(0.8748);">-60</span>
<span class="t" style="left:566.60px;top:531px;font-size:9.4px;color:#ffffff;font-weight:700;transform:scaleX(0.9147);">69%</span>
<span class="t" style="left:172.80px;top:561px;font-size:9.4px;color:#404040;transform:scaleX(0.8572);">Number of Locations</span>
<span class="t" style="left:281.50px;top:561px;font-size:9.4px;color:#404040;transform:scaleX(0.7787);">1</span>
<span class="t" style="left:456.80px;top:561px;font-size:9.4px;color:#404040;transform:scaleX(0.8588);">50</span>
<span class="t" style="left:554.20px;top:561px;font-size:9.4px;color:#ffffff;font-weight:700;transform:scaleX(0.9253);">57%</span>
<span class="t" style="left:172.80px;top:591px;font-size:9.4px;color:#404040;transform:scaleX(0.8377);">Average Building Age</span>
<span class="t" style="left:282.00px;top:591px;font-size:9.4px;color:#404040;transform:scaleX(0.8301);">49</span>
<span class="t" style="left:455.00px;top:591px;font-size:9.4px;color:#404040;transform:scaleX(0.8748);">-25</span>
<span class="t" style="left:552.00px;top:591px;font-size:9.4px;color:#5a7fc0;font-weight:700;transform:scaleX(0.9200);">29%</span>
</body></html>
